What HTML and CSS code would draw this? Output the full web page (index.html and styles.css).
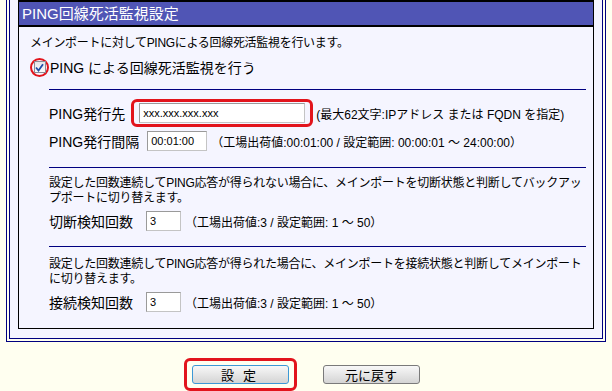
FILE: index.html
```html
<!DOCTYPE html>
<html lang="ja">
<head>
<meta charset="UTF-8">
<title>PING回線死活監視設定</title>
<link rel="stylesheet" href="styles.css">
</head>
<body>
<div class="frame">
  <div class="frame-in">
    <div class="box">
      <div class="box-head">PING回線死活監視設定</div>
      <div class="intro">
        <p class="lead">メインポートに対してPINGによる回線死活監視を行います。</p>
        <label class="chk-row">
          <span class="ring"><span class="chk"><svg width="9" height="9" viewBox="0 0 9 9"><path d="M1 4.5 L3.5 7.5 L8 1.2" fill="none" stroke="#1f4fa8" stroke-width="1.8"/></svg></span></span>
          <span>PING による回線死活監視を行う</span>
        </label>
      </div>

      <div class="sect">
        <div class="row first">
          <span class="lbl">PING発行先</span>
          <span class="hl"><input class="txt w-host" type="text" value="xxx.xxx.xxx.xxx"></span>
          <span class="note near">(最大62文字:IPアドレス または FQDN を指定)</span>
        </div>
        <div class="row">
          <span class="lbl">PING発行間隔</span>
          <input class="txt w-time" type="text" value="00:01:00">
          <span class="note">（工場出荷値:00:01:00 / 設定範囲: 00:00:01 ～ 24:00:00）</span>
        </div>
      </div>

      <div class="sect cut">
        <p class="desc">設定した回数連続してPING応答が得られない場合に、メインポートを切断状態と判断してバックアップポートに切り替えます。</p>
        <div class="row">
          <span class="lbl">切断検知回数</span>
          <input class="txt w-num" type="text" value="3">
          <span class="note">（工場出荷値:3 / 設定範囲: 1 ～ 50）</span>
        </div>
      </div>

      <div class="sect last">
        <p class="desc">設定した回数連続してPING応答が得られた場合に、メインポートを接続状態と判断してメインポートに切り替えます。</p>
        <div class="row">
          <span class="lbl">接続検知回数</span>
          <input class="txt w-num" type="text" value="3">
          <span class="note">（工場出荷値:3 / 設定範囲: 1 ～ 50）</span>
        </div>
      </div>
    </div>
  </div>
</div>

<div class="actions">
  <span class="btn-hl"><button class="btn focus" type="button">設 定</button></span>
  <button class="btn" type="button">元に戻す</button>
</div>
</body>
</html>
```

FILE: styles.css
```css
*{
    margin:0;
    padding:0;
    box-sizing:border-box;
}
body{
    background:#fffff0;
    font-family:"Liberation Sans","Noto Sans CJK JP",sans-serif;
    color:#000;
    width:612px;
    height:391px;
    overflow:hidden;
}
.frame{
    margin:0 6px;
    border:1px solid #000080;
    border-top:none;
    padding:0 2px 2px;
    background:#fffff0;
}
.frame-in{
    border:1px solid #000080;
    border-top:none;
    background:#f5f5ff;
    padding:0 8px 9px 8px;
}
.box{
    border:1px solid #000;
    border-top:none;
    background:#f5f5ff;
    padding-bottom:16px;
}
.box-head{
    background:#5055b5;
    color:#fff;
    border-top:2px solid #000;
    border-bottom:2px solid #000;
    height:27px;
    line-height:23px;
    font-size:15px;
    padding-left:3px;
}
.intro{
    padding:8px 0 0 11px;
}
.lead{
    font-size:12px;
    line-height:16px;
    letter-spacing:-0.3px;
}
.chk-row{
    display:flex;
    align-items:center;
    height:20px;
    margin-top:6px;
    font-size:14px;
}
.ring{
    width:19px;
    height:19px;
    border:2px solid #e2141c;
    border-radius:50%;
    display:flex;
    align-items:center;
    justify-content:center;
    margin-right:1px;
}
.chk{
    width:12px;
    height:12px;
    border:1px solid #8c8c96;
    background:linear-gradient(#e6e6ea,#fafafa);
    display:flex;
    align-items:center;
    justify-content:center;
}
.sect{
    margin:12px 7px 0 30px;
    border-top:1px solid #000080;
}
.sect.cut{
    margin-top:16px;
}
.sect.last{
    margin-top:15px;
}
.row{
    display:flex;
    align-items:center;
    height:20px;
    font-size:14px;
}
.row.first{
    height:28px;
    margin-top:9px;
    margin-bottom:4px;
}
.lbl{
    white-space:nowrap;
}
.txt{
    height:20px;
    border:1px solid #c4c4c4;
    border-top-color:#9a9a9a;
    border-left-color:#9a9a9a;
    background:#fff;
    font-family:"Liberation Sans",sans-serif;
    font-size:11px;
    padding:0 3px;
    margin-left:8px;
    color:#000;
}
.w-host{
    width:166px;
    margin-left:0;
}
.w-time{
    width:60px;
}
.w-num{
    width:35px;
    margin-left:13px;
}
.hl{
    border:3px solid #e2141c;
    border-radius:6px;
    padding:1px 5px;
    margin-left:6px;
    display:flex;
}
.note{
    font-size:12px;
    margin-left:4px;
    white-space:nowrap;
}
.note.near{
    margin-left:3px;
}
.desc{
    font-size:12px;
    line-height:15px;
    letter-spacing:-0.25px;
    margin-top:8px;
    margin-bottom:5px;
}
.last .desc{
    margin-top:10px;
    margin-bottom:5px;
}
.actions{
    display:flex;
    justify-content:center;
    align-items:center;
    gap:26px;
    padding-right:9px;
    margin-top:16px;
}
.btn-hl{
    border:3px solid #e2141c;
    border-radius:6px;
    padding:4px 5px;
    display:flex;
}
.btn{
    width:97px;
    height:19px;
    border:1px solid #7a7a7a;
    border-radius:3px;
    background:linear-gradient(#f8f8f8,#e6e6e6 50%,#d4d4d4);
    font-family:"Noto Sans CJK JP",sans-serif;
    font-size:13px;
    line-height:16px;
    color:#000;
}
.btn.focus{
    border-color:#3c98d6;
    letter-spacing:3px;
}
```
